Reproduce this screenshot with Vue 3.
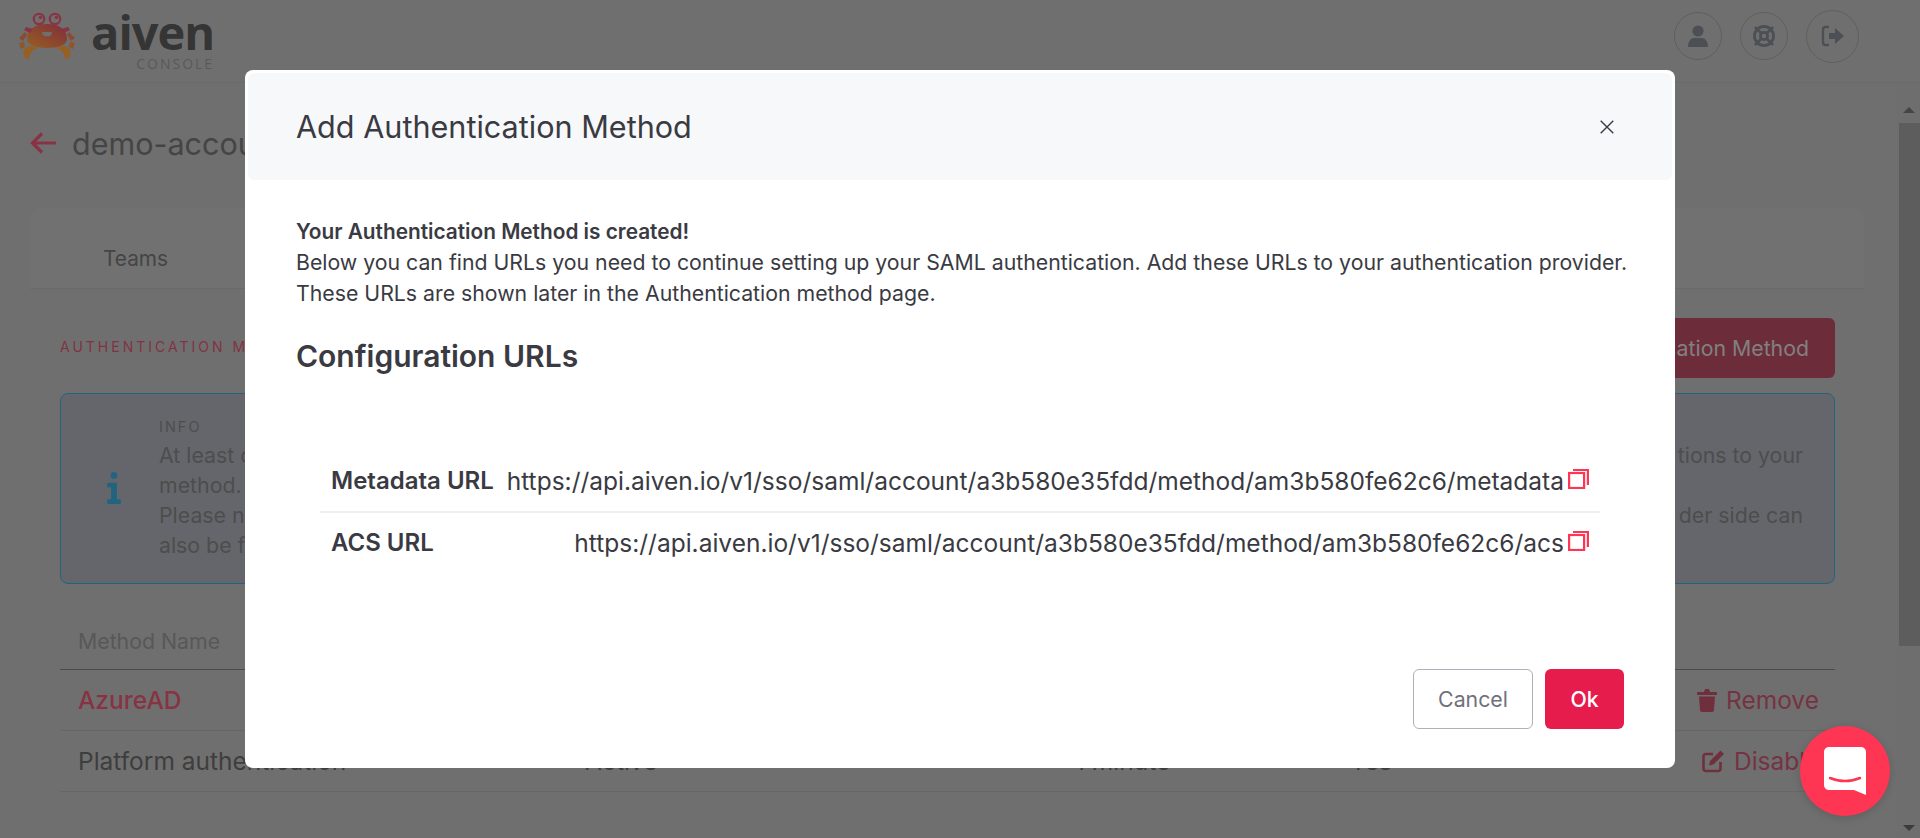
<template>
  <div class="page">
    <header class="topbar">
      <div class="brand">
        <svg class="crab" viewBox="0 0 58 48" width="58" height="48">
          <defs>
            <linearGradient id="crabFill" x1="0" y1="1" x2="1" y2="0">
              <stop offset="0" stop-color="#d88830" />
              <stop offset="1" stop-color="#b84258" />
            </linearGradient>
          </defs>
          <circle cx="21" cy="7" r="5.200" fill="none" stroke="#c44a62" stroke-width="2.200" />
          <circle cx="37" cy="7" r="5.200" fill="none" stroke="#c44a62" stroke-width="2.200" />
          <circle cx="22.500" cy="5.500" r="1.800" fill="#c44a62" />
          <circle cx="38.500" cy="5.500" r="1.800" fill="#c44a62" />
          <path d="M9 27c0-10 9-15 20-15s20 5 20 15c0 6-9 9-20 9S9 33 9 27z" fill="url(#crabFill)" />
          <path d="M24 20h10c0 3-2 4.500-5 4.500S24 23 24 20z" fill="#a0a0a0" />
          <path d="M1 26l6-6 2 3-4 6zM57 26l-6-6-2 3 4 6z" fill="#c86a48" />
          <path d="M8 15l7 2-3 4-6-3zM50 15l-7 2 3 4 6-3z" fill="#c44a62" />
          <path d="M1 31l5-1 1 5-4 2zM57 31l-5-1-1 5 4 2z" fill="#d07a3c" />
          <path d="M6 38c3-5 12-5 13-1-3 0-7 2-8 10-4 0-7-5-5-9zM52 38c-3-5-12-5-13-1 3 0 7 2 8 10 4 0 7-5 5-9z" fill="#d88830" />
        </svg>
        <div class="wordmark">
          <span class="wordmark-name">aiven</span>
          <span class="wordmark-sub">CONSOLE</span>
        </div>
      </div>
      <div class="topbar-actions">
        <button class="round-btn">
          <svg viewBox="0 0 24 24" width="24" height="24"><circle cx="12" cy="7" r="5.600" fill="#6e7177" /><path d="M2 23c0-6 3-9 6-9h8c3 0 6 3 6 9z" fill="#6e7177" /></svg>
        </button>
        <button class="round-btn">
          <svg viewBox="0 0 24 24" width="24" height="24" fill="none" stroke="#6e7177" stroke-width="2.800"><circle cx="12" cy="12" r="9.500" /><circle cx="12" cy="12" r="3.600" /><path d="M3 3l6.500 6.500M21 3l-6.500 6.500M3 21l6.500-6.500M21 21l-6.500-6.500" /></svg>
        </button>
        <button class="round-btn round-btn-lg">
          <svg viewBox="0 0 24 24" width="24" height="24"><path d="M8 3H4.500C3 3 2 4 2 5.500v13C2 20 3 21 4.500 21H8" fill="none" stroke="#6e7177" stroke-width="2.400" /><path d="M8 9h6V4l9 8-9 8v-5H8z" fill="#6e7177" /></svg>
        </button>
      </div>
    </header>

    <div class="content">
      <main class="main">
        <div class="title-row">
          <svg viewBox="0 0 28 24" width="28" height="24" fill="none" stroke="#c24a62" stroke-width="3.200"><path d="M26 12H3M12 2.500L2.500 12l9.500 9.500" /></svg>
          <h1 class="account-name">demo-account</h1>
        </div>

        <nav class="tabs"><span class="tab">Teams</span></nav>

        <div class="section-head">
          <span class="section-label">AUTHENTICATION METHODS</span>
          <button class="add-btn">Add Authentication Method</button>
        </div>

        <div class="info-box">
          <svg class="info-icon" viewBox="0 0 14 34" width="14" height="33" fill="#3090b8"><circle cx="7" cy="3.500" r="3.500" /><path d="M1 11h9v17h3a1 1 0 0 1 1 1v3a1 1 0 0 1-1 1H1a1 1 0 0 1-1-1v-3a1 1 0 0 1 1-1h3V16H1a1 1 0 0 1-1-1v-3a1 1 0 0 1 1-1z" /></svg>
          <div class="info-text">
            <div class="info-title">INFO</div>
            <div v-for="line in infoLines" :key="line[0]" class="info-line">
              <span>{{ line[0] }}</span><span>{{ line[1] }}</span>
            </div>
          </div>
        </div>

        <div class="methods">
          <div class="methods-row methods-head">
            <span>Method Name</span>
          </div>
          <div v-for="m in methods" :key="m.name" class="methods-row">
            <span :class="{ 'method-link': m.link }">{{ m.name }}</span>
            <span>{{ m.status }}</span>
            <span>{{ m.ttl }}</span>
            <span>{{ m.auto }}</span>
            <span class="method-action">
              <svg v-if="m.link" viewBox="0 0 20 24" width="20" height="24" fill="#a04458"><path d="M1 4h6l1-3h4l1 3h6c.6 0 1 .4 1 1v1c0 .6-.4 1-1 1H1c-.6 0-1-.4-1-1V5c0-.6.4-1 1-1z" /><path d="M2 8.500h16L17 22c0 1-1 2-2 2H5c-1 0-2-1-2-2z" /></svg>
              <svg v-else class="edit-icon" viewBox="0 0 24 24" width="24" height="24" fill="none" stroke="#a04458" stroke-width="2.600"><path d="M12 5H5C3.500 5 2.500 6 2.500 7.500v12C2.500 21 3.500 22 5 22h12c1.500 0 2.500-1 2.500-2.500V13" /><path d="M9 12L19.500 1.500l3.500 3.500L12.500 15.500 8 16.500z" fill="#a04458" stroke="none" /></svg>
              {{ m.action }}
            </span>
          </div>
        </div>
      </main>
      <div class="scrollbar">
        <span class="arrow arrow-up"></span>
        <span class="thumb"></span>
        <span class="arrow arrow-down"></span>
      </div>
    </div>

    <div class="overlay">
      <section class="modal">
        <div class="modal-head">
          <h2 class="modal-title">Add Authentication Method</h2>
          <svg class="modal-close" viewBox="0 0 14 14" width="14" height="14" fill="none" stroke="#3a3a42" stroke-width="1.400"><path d="M.7.7l12.600 12.600M13.300.7L.7 13.300" /></svg>
        </div>
        <div class="modal-body">
          <p class="intro">
            <strong>Your Authentication Method is created!</strong><br />
            Below you can find URLs you need to continue setting up your SAML authentication. Add these URLs to your authentication provider.<br />
            These URLs are shown later in the Authentication method page.
          </p>
          <h3 class="config-title">Configuration URLs</h3>
          <div class="urls">
            <div v-for="u in urls" :key="u.label" class="url-row">
              <span class="url-label">{{ u.label }}</span>
              <span class="url-value">{{ u.value }}</span>
              <svg class="copy" viewBox="0 0 21 21" width="21" height="21" fill="none" stroke="#ff3554" stroke-width="2.200"><rect x="1.100" y="5" width="15" height="15" /><path d="M5 2h14.900v15" /></svg>
            </div>
          </div>
        </div>
        <div class="modal-foot">
          <button class="btn-cancel">Cancel</button>
          <button class="btn-ok">Ok</button>
        </div>
      </section>
    </div>

    <button class="chat-btn">
      <svg viewBox="0 0 42 48" width="42" height="48"><path d="M5 0h32c2.800 0 5 2.200 5 5v43l-12-5H5c-2.800 0-5-2.200-5-5V5c0-2.800 2.200-5 5-5z" fill="#fff" /><path d="M6 31c9 4 21 4 30 0" fill="none" stroke="#ff3554" stroke-width="2.500" stroke-linecap="round" /></svg>
    </button>
  </div>
</template>

<script setup>
const infoLines = [
  ['At least one authentication method is required', 'tions to your'],
  ['method.', ''],
  ['Please note', 'der side can'],
  ['also be found', ''],
]

const methods = [
  { name: 'AzureAD', link: true, status: '', ttl: '', auto: '', action: 'Remove' },
  { name: 'Platform authentication', link: false, status: 'Active', ttl: '1 minute', auto: 'Yes', action: 'Disable' },
]

const urls = [
  { label: 'Metadata URL', value: 'https://api.aiven.io/v1/sso/saml/account/a3b580e35fdd/method/am3b580fe62c6/metadata' },
  { label: 'ACS URL', value: 'https://api.aiven.io/v1/sso/saml/account/a3b580e35fdd/method/am3b580fe62c6/acs' },
]
</script>

<style>
html,
body {
  margin: 0;
  height: 100%;
  overflow: hidden;
}
</style>

<style scoped>
.page {
  position: relative;
  height: 838px;
  overflow: hidden;
  background: #a0a0a0;
  color: #595959;
  font-family: Inter, "Liberation Sans", sans-serif;
}
button {
  font-family: inherit;
}
h1,
h2,
h3,
p {
  margin: 0;
  font-weight: 400;
}

/* top bar */
.topbar {
  height: 83px;
  box-sizing: border-box;
  display: flex;
  align-items: center;
  justify-content: space-between;
  padding: 0 61px 10px 18px;
  border-bottom: 1px solid #999;
}
.brand {
  display: flex;
  align-items: flex-start;
  gap: 15px;
  margin-top: 10px;
}
.crab {
  display: block;
}
.wordmark {
  display: flex;
  flex-direction: column;
  align-items: flex-end;
  color: #4c4c4c;
}
.wordmark-name {
  font-family: "Open Sans", sans-serif;
  font-size: 47px;
  font-weight: 700;
  letter-spacing: -1px;
  line-height: 40px;
}
.wordmark-sub {
  margin-top: 6px;
  font-family: "Open Sans", sans-serif;
  font-size: 14px;
  line-height: 12px;
  letter-spacing: 2px;
  color: #808080;
}
.topbar-actions {
  display: flex;
  align-items: center;
  gap: 18px;
}
.round-btn {
  width: 48px;
  height: 48px;
  padding: 0;
  border: 1px solid #888;
  border-radius: 50%;
  background: transparent;
  display: flex;
  align-items: center;
  justify-content: center;
}
.round-btn-lg {
  width: 53px;
  height: 53px;
}

/* page behind the dialog */
.content {
  display: flex;
  height: 755px;
}
.main {
  flex: 1;
  min-width: 0;
  padding: 45px 33px 0 30px;
}
.title-row {
  display: flex;
  align-items: center;
  gap: 14px;
  height: 30px;
}
.account-name {
  font-size: 30.500px;
  color: #636363;
}
.tabs {
  margin-top: 50px;
  height: 60px;
  display: flex;
  align-items: center;
  padding: 20px 73px 0;
  border-radius: 10px 10px 0 0;
  background: #a2a2a2;
  border-bottom: 1px solid #999;
}
.tab {
  font-size: 20.800px;
  color: #636363;
}
.section-head {
  margin: 29px 29px 15px 30px;
  display: flex;
  align-items: center;
  justify-content: space-between;
}
.section-label {
  padding-bottom: 3px;
  font-size: 14px;
  letter-spacing: 3px;
  color: #b84a62;
}
.add-btn {
  height: 60px;
  padding: 0 26px;
  border: 0;
  border-radius: 6px;
  background: #9d4054;
  color: #b8b8b8;
  font-size: 21.300px;
}
.info-box {
  margin: 0 29px 0 30px;
  height: 191px;
  box-sizing: border-box;
  display: flex;
  align-items: center;
  border: 1px solid #3090b8;
  border-radius: 8px;
  background: #90939a;
  color: #6f6f6f;
}
.info-icon {
  margin: 0 38px 0 46px;
  flex: none;
}
.info-text {
  flex: 1;
  padding-right: 31px;
  font-size: 21.300px;
  line-height: 30px;
}
.info-title {
  font-size: 14.500px;
  letter-spacing: 2px;
  line-height: 20px;
  margin-bottom: 3px;
}
.info-line {
  display: flex;
  justify-content: space-between;
}
.methods {
  margin: 24px 29px 0 30px;
  font-size: 24.500px;
}
.methods-row {
  display: grid;
  grid-template-columns: 507px 490px 275px 347px 1fr;
  align-items: center;
  height: 60px;
  padding: 0 18px;
  border-bottom: 1px solid #929292;
}
.methods-head {
  height: 56px;
  padding-top: 5px;
  font-size: 21.300px;
  border-bottom-color: #6d6d6d;
  color: #7e7e7e;
}
.method-link {
  color: #c24a62;
  font-weight: 500;
}
.method-action {
  display: flex;
  align-items: center;
  gap: 9px;
  white-space: nowrap;
  color: #a84a60;
}
.edit-icon {
  margin-left: 4px;
}
.scrollbar {
  width: 23px;
  background: #9e9e9e;
  display: flex;
  flex-direction: column;
  align-items: center;
}
.arrow {
  width: 0;
  height: 0;
  border-left: 6px solid transparent;
  border-right: 6px solid transparent;
}
.arrow-up {
  margin-top: 24px;
  border-bottom: 6px solid #636363;
}
.thumb {
  width: 21px;
  height: 523px;
  margin-top: 10px;
  margin-left: 1px;
  background: #868686;
}
.arrow-down {
  margin-top: auto;
  margin-bottom: 7px;
  border-top: 6px solid #555;
}

/* dialog */
.overlay {
  position: absolute;
  inset: 0;
  background: rgba(0, 0, 0, 0.3);
}
.modal {
  position: absolute;
  left: 245px;
  top: 70px;
  width: 1430px;
  height: 698px;
  box-sizing: border-box;
  padding: 3px;
  display: flex;
  flex-direction: column;
  background: #fff;
  border-radius: 8px;
}
.modal-head {
  height: 107px;
  flex: none;
  display: flex;
  align-items: center;
  justify-content: space-between;
  padding: 0 58px 0 48px;
  background: #f7f8fa;
  border-radius: 6px;
}
.modal-title {
  font-size: 30.600px;
  color: #3a3a42;
}
.modal-body {
  flex: 1;
  padding: 36px 48px 0;
  color: #3a3a42;
}
.intro {
  font-size: 21.270px;
  line-height: 31px;
  white-space: nowrap;
}
.intro strong {
  font-size: 20.800px;
  font-weight: 600;
}
.config-title {
  margin-top: 27px;
  font-size: 30px;
  font-weight: 600;
  line-height: 40px;
}
.urls {
  margin: 74px 24px 0;
}
.url-row {
  display: flex;
  align-items: center;
  height: 61px;
  padding: 0 11px;
  font-size: 24.500px;
  border-bottom: 2px solid #eeeeee;
}
.url-row:last-child {
  height: 59px;
  border-bottom: 0;
}
.url-label {
  font-size: 24px;
  font-weight: 600;
}
.url-value {
  margin-left: auto;
  margin-right: 4px;
}
.copy {
  flex: none;
  margin-bottom: 4px;
}
.modal-foot {
  flex: none;
  display: flex;
  justify-content: flex-end;
  gap: 12px;
  padding: 0 48px 36px;
}
.btn-cancel,
.btn-ok {
  height: 60px;
  border-radius: 6px;
  font-size: 21.300px;
}
.btn-cancel {
  width: 120px;
  border: 1px solid #b0b0ba;
  background: #fff;
  color: #70707c;
}
.btn-ok {
  width: 79px;
  border: 0;
  background: #e51c4c;
  color: #fff;
  font-weight: 500;
}
.chat-btn {
  position: absolute;
  right: 30px;
  bottom: 22px;
  width: 90px;
  height: 90px;
  padding: 0;
  border: 0;
  border-radius: 50%;
  background: #ff3554;
  box-shadow: 0 2px 8px rgba(0, 0, 0, 0.15);
  display: flex;
  align-items: center;
  justify-content: center;
}
</style>
